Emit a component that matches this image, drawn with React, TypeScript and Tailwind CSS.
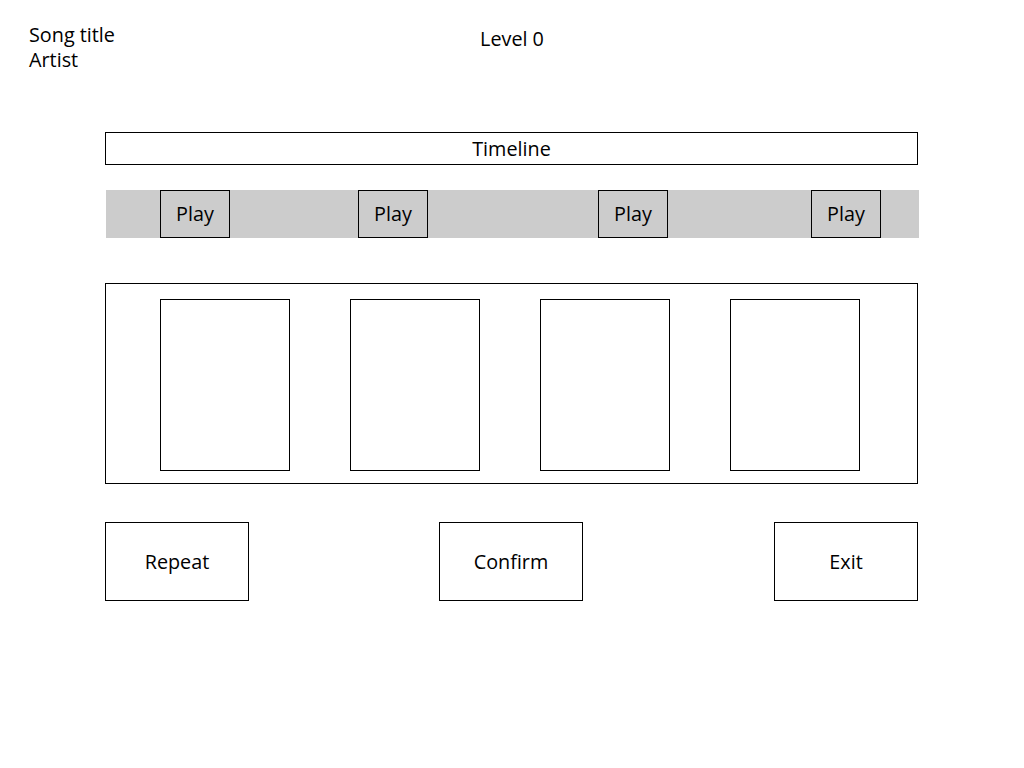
export default function App() {
  const plays = ['ml-[54px]', 'ml-[128px]', 'ml-[170px]', 'ml-[143px]'];
  const actions = [
    { label: 'Repeat', cls: '' },
    { label: 'Confirm', cls: 'ml-[190px]' },
    { label: 'Exit', cls: 'ml-auto' },
  ];

  return (
    <div
      className="relative h-[768px] w-[1024px] bg-white text-[19.8px] text-black"
      style={{ fontFamily: '"Open Sans", "Noto Sans", sans-serif' }}
    >
      <header className="flex items-start px-[29px] pt-[22px]">
        <div className="w-[200px] leading-[25px]">
          <div>Song title</div>
          <div>Artist</div>
        </div>
        <div className="flex-1 pt-[4px] pr-[200px] text-center leading-[25px]">
          Level 0
        </div>
      </header>

      <main className="mx-[105px] mt-[60px] w-[814px]">
        <div className="flex h-[33px] w-[813px] items-center justify-center border border-black">
          Timeline
        </div>

        <div className="mt-[25px] ml-[1px] flex h-[48px] w-[813px] bg-[#cccccc]">
          {plays.map((m, i) => (
            <button
              key={i}
              className={`${m} flex h-[48px] w-[70px] items-center justify-center border border-black bg-[#cccccc]`}
            >
              Play
            </button>
          ))}
        </div>

        <div className="mt-[45px] flex h-[201px] w-[813px] gap-[60px] border border-black pt-[15px] pl-[54px]">
          {[0, 1, 2, 3].map((i) => (
            <div key={i} className="h-[172px] w-[130px] border border-black" />
          ))}
        </div>

        <div className="mt-[38px] flex w-[813px]">
          {actions.map((a) => (
            <button
              key={a.label}
              className={`${a.cls} flex h-[79px] w-[144px] items-center justify-center border border-black`}
            >
              {a.label}
            </button>
          ))}
        </div>
      </main>
    </div>
  );
}
